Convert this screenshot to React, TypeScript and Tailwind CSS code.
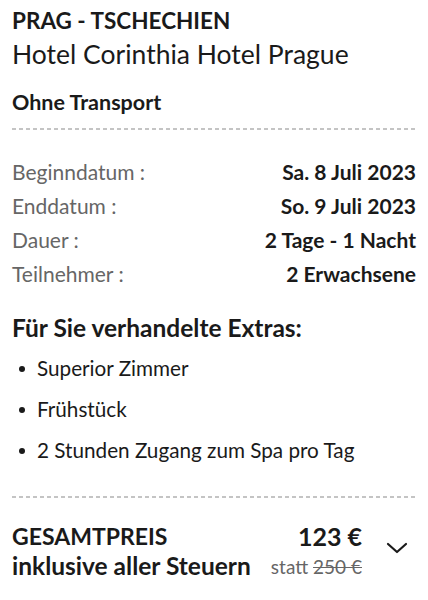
import React from "react";

const rows = [
  ["Beginndatum :", "Sa. 8 Juli 2023"],
  ["Enddatum :", "So. 9 Juli 2023"],
  ["Dauer :", "2 Tage - 1 Nacht"],
  ["Teilnehmer :", "2 Erwachsene"],
];

const extras = ["Superior Zimmer", "Frühstück", "2 Stunden Zugang zum Spa pro Tag"];

function Dashed() {
  return (
    <div className="h-[2px] w-full bg-[repeating-linear-gradient(to_right,#c4c4c4_0_4px,transparent_4px_7px)]" />
  );
}

export default function App() {
  return (
    <div className="w-[428px] h-[600px] bg-white px-3 text-[#1a1a1a] font-['Lato',sans-serif] overflow-hidden">
      <div className="pt-[8px] text-[22.5px] font-bold leading-[26px]">PRAG - TSCHECHIEN</div>
      <div className="text-[26.5px] leading-[34px] mt-[3px]">Hotel Corinthia Hotel Prague</div>
      <div className="mt-[18px] text-[21.5px] font-bold leading-[26px]">Ohne Transport</div>
      <div className="mt-[13px]">
        <Dashed />
      </div>
      <div className="mt-[25px] flex flex-col">
        {rows.map(([l, v]) => (
          <div key={l} className="flex justify-between h-[34px] items-center text-[21px]">
            <span className="text-[#666]">{l}</span>
            <span className="font-bold">{v}</span>
          </div>
        ))}
      </div>
      <div className="mt-[22px] text-[24.5px] font-bold leading-[30px]">Für Sie verhandelte Extras:</div>
      <ul className="mt-[5px] flex flex-col">
        {extras.map((e) => (
          <li key={e} className="flex items-center h-[41px] text-[20.7px]">
            <span className="w-[6px] h-[6px] rounded-full bg-[#1a1a1a] ml-[7px] mr-[12px]" />
            {e}
          </li>
        ))}
      </ul>
      <div className="mt-[25px]">
        <Dashed />
      </div>
      <div className="mt-[23px] flex items-start">
        <div className="flex-1 font-bold leading-[30px]">
          <div className="text-[23px]">GESAMTPREIS</div>
          <div className="text-[24.5px]">inklusive aller Steuern</div>
        </div>
        <div className="flex flex-col items-end">
          <div className="text-[25px] font-bold leading-[30px]">123 €</div>
          <div className="text-[19px] leading-[30px] mt-[1px] text-[#666]">
            statt <span className="line-through">250 €</span>
          </div>
        </div>
        <div className="w-[54px] flex justify-end pt-[21px]">
          <svg width="22" height="12" viewBox="0 0 22 12" fill="none" className="mr-[8px]">
            <path d="M2 2l9 8 9-8" stroke="#1a1a1a" strokeWidth="2.2" strokeLinecap="round" strokeLinejoin="round" />
          </svg>
        </div>
      </div>
    </div>
  );
}
